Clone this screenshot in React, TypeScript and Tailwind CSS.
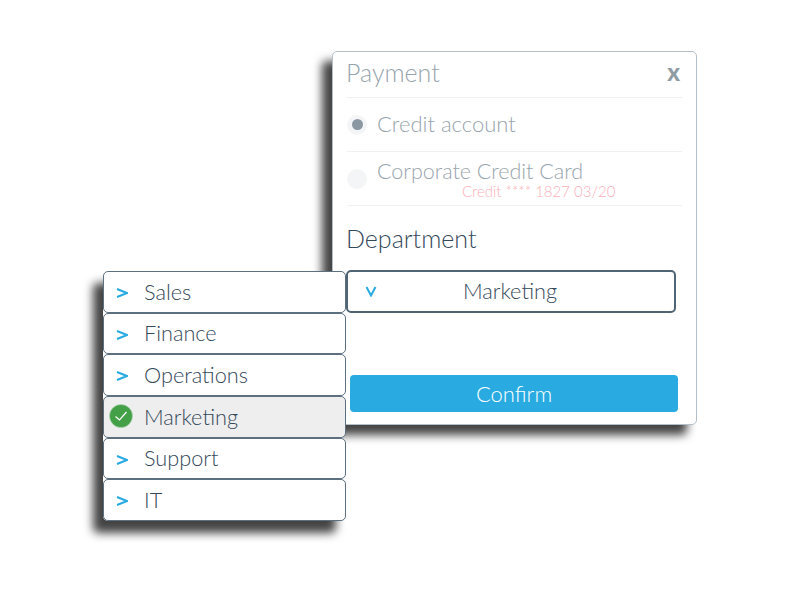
const departments = ["Sales", "Finance", "Operations", "Marketing", "Support", "IT"];

function Chevron({ down = false }: { down?: boolean }) {
  return (
    <svg width="12" height="12" viewBox="0 0 12 12" fill="none" stroke="#29abe2" strokeWidth="2">
      <path d={down ? "M1.5 2 L6 10.5 L10.5 2" : "M1 2 L11 6 L1 10"} />
    </svg>
  );
}

function CheckBadge() {
  return (
    <svg width="24" height="24" viewBox="0 0 24 24">
      <circle cx="12" cy="12" r="11.5" fill="#43a047" stroke="#bcd8bd" strokeWidth="0.6" />
      <path d="M6.5 12.5 L10.5 16 L17.5 8" fill="none" stroke="#ffffff" strokeWidth="1.2" />
    </svg>
  );
}

function DepartmentRow({ name }: { name: string }) {
  const active = name === "Marketing";
  return (
    <div
      className={`flex flex-1 items-center rounded-[5px] border border-[#5c7080] ${
        active ? "bg-[#eeeeee] pl-[5px]" : "bg-white pl-[12px]"
      }`}
    >
      <span className={active ? "mt-[-2px] flex w-[35px]" : "mt-[2px] flex w-[28px]"}>
        {active ? <CheckBadge /> : <Chevron />}
      </span>
      <span className="text-[21.7px] font-light text-[#34495a]">{name}</span>
    </div>
  );
}

export default function App() {
  return (
    <div className="relative h-[606px] w-[800px] overflow-hidden bg-white font-['Lato',sans-serif]">
      <div className="ml-[332px] mt-[51px] flex h-[374px] w-[365px] flex-col rounded-[5px] border border-[#b4c0c9] bg-white px-[14px] shadow-[-10px_10px_10px_#444444]">
        <div className="flex h-[46px] items-center justify-between border-b border-[#eceff1] pr-[2px]">
          <span className="mt-[-3px] ml-[-1px] text-[25px] font-light text-[#98a4ad]">Payment</span>
          <span className="mt-[-6px] text-[24px] font-black leading-none text-[#8f9ba3]">x</span>
        </div>
        <div className="flex h-[54px] items-center gap-[10px] border-b border-[#eff1f3]">
          <span className="flex h-[20px] w-[20px] items-center justify-center rounded-full bg-[#f4f5f6]">
            <span className="h-[11px] w-[11px] rounded-full bg-[#8b98a2]" />
          </span>
          <span className="mt-[-2px] text-[22px] font-light text-[#98a4ad]">Credit account</span>
        </div>
        <div className="flex h-[54px] gap-[10px] border-b border-[#eff1f3]">
          <span className="mt-[17px] h-[20px] w-[20px] rounded-full bg-[#f4f5f6]" />
          <div className="flex flex-col">
            <span className="mt-[4px] text-[21.5px] font-light leading-[30px] text-[#98a4ad]">
              Corporate Credit Card
            </span>
            <span className="ml-[85px] mt-[-4px] text-[15px] font-light leading-[18px] text-[#f9b0b8]">
              Credit **** 1827 03/20
            </span>
          </div>
        </div>
        <span className="ml-[-1px] mt-[16px] text-[25px] font-light leading-[32px] text-[#34495a]">Department</span>
        <div className="ml-[-1px] mt-[16px] flex h-[43px] w-[330px] items-center rounded-[5px] border-2 border-[#4f6575] pl-[17px]">
          <span className="mt-[-2px] flex">
            <Chevron down />
          </span>
          <span className="ml-[86px] text-[21.7px] font-light text-[#34495a]">Marketing</span>
        </div>
        <button className="ml-[3px] mt-[62px] h-[37px] w-[328px] rounded-[4px] bg-[#29abe2] text-[22px] font-light text-white">
          Confirm
        </button>
      </div>

      <div className="absolute left-[103px] top-[271px] flex h-[250px] w-[243px] flex-col rounded-[5px] shadow-[-10px_12px_10px_#444444]">
        {departments.map((name) => (
          <DepartmentRow key={name} name={name} />
        ))}
      </div>
    </div>
  );
}
